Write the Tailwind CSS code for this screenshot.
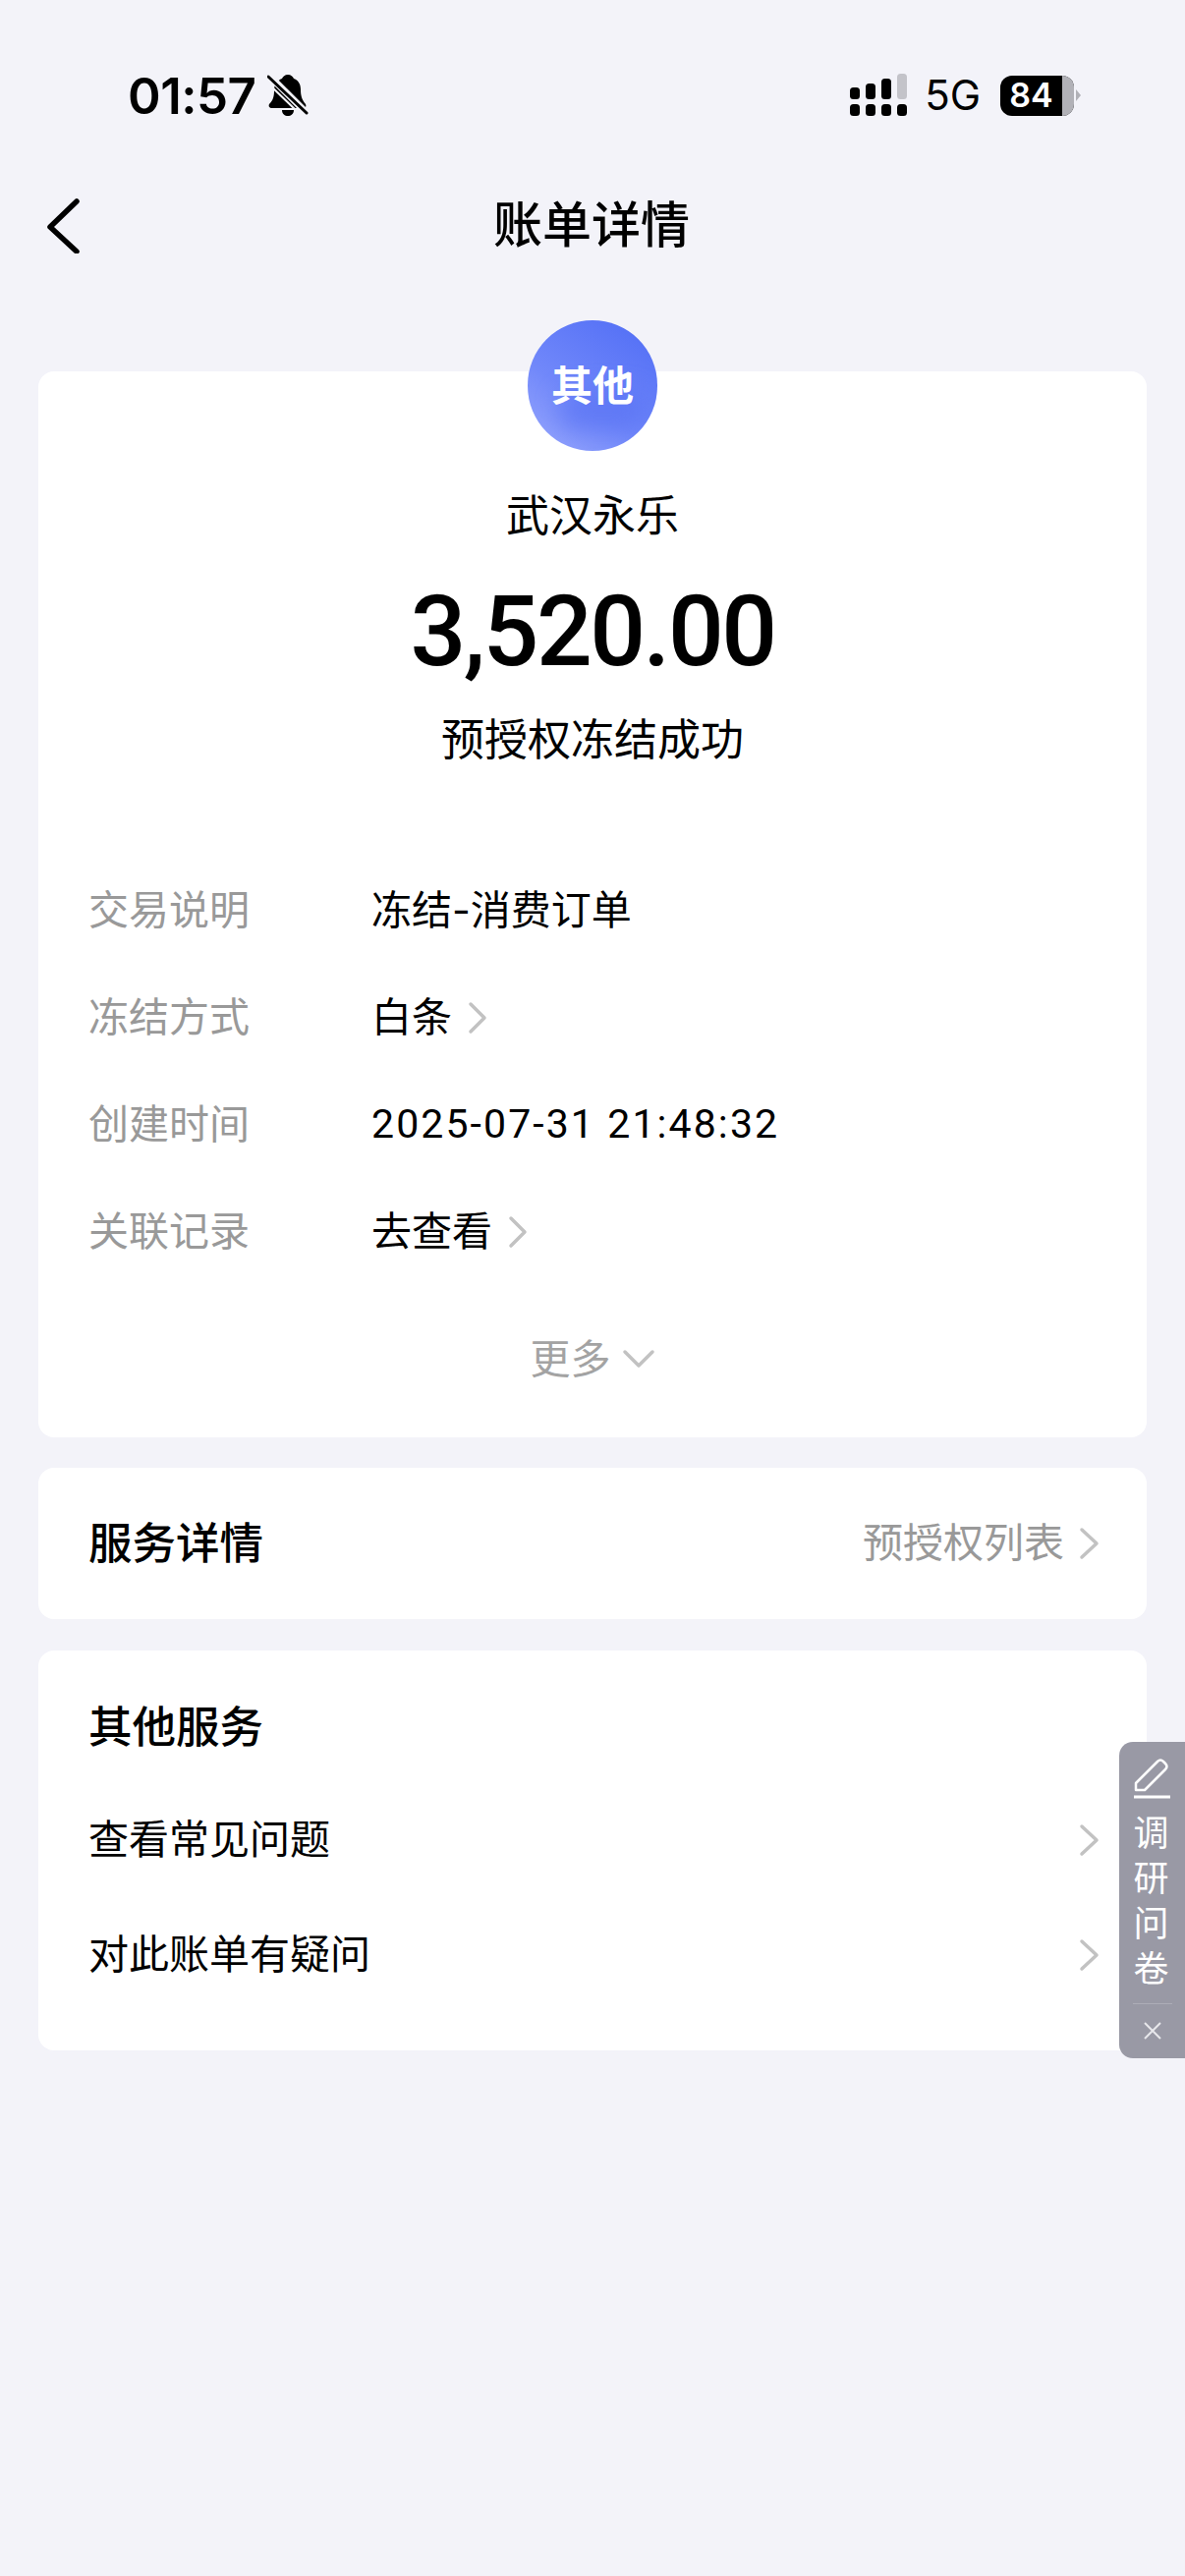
<!DOCTYPE html>
<html lang="zh-CN">
<head>
    <meta charset="UTF-8">
    <meta name="viewport" content="width=device-width, initial-scale=1.0">
    <title>账单详情</title>
    <script src="https://cdn.jsdelivr.net/npm/@tailwindcss/browser@4"></script>
</head>
<body class="relative w-[1206px] h-[2622px] overflow-hidden bg-[#f3f3f9] text-black font-['Inter','Noto_Sans_CJK_SC',sans-serif]">
    <!-- status bar -->
    <div class="h-[158px] pt-[66px] pl-[130px] pr-[106px] flex justify-between items-start">
        <div class="flex items-center h-[62px] gap-[12px]">
            <span class="text-[51px] leading-none font-semibold font-['Inter',sans-serif] tracking-[-0.5px]">01:57</span>
            <svg class="w-[42px] h-[44px]" viewBox="0 0 42 44">
                <path d="M21 1c3 0 5 2 6 4 5 2 7 6 7 11 0 6 1 10 5 15 1 2 0 4-2 4H5c-3 0-4-2-3-4 4-4 5-8 5-14 0-6 3-10 8-12 1-2 3-4 6-4zM15 37h12c0 4-3 6-6 6s-6-2-6-6z" fill="#000"/>
                <path d="M2 2l38 38" stroke="#f3f3f9" stroke-width="7"/>
                <path d="M1 3l39 37" stroke="#000" stroke-width="3" stroke-linecap="round"/>
                <path d="M0 9l31 30" stroke="#f3f3f9" stroke-width="2"/>
            </svg>
        </div>
        <div class="flex items-center h-[62px]">
            <svg class="w-[58px] h-[44px]" viewBox="0 0 58 44">
                <rect x="0" y="14" width="10" height="12" rx="3.5" fill="#000"/>
                <rect x="16" y="10" width="10" height="16" rx="3.5" fill="#000"/>
                <rect x="32" y="5" width="10" height="21" rx="3.5" fill="#000"/>
                <rect x="48" y="0" width="10" height="26" rx="3.5" fill="#c3c3c9"/>
                <rect x="0" y="31" width="10" height="12" rx="3.5" fill="#000"/>
                <rect x="16" y="31" width="10" height="12" rx="3.5" fill="#000"/>
                <rect x="32" y="31" width="10" height="12" rx="3.5" fill="#000"/>
                <rect x="48" y="31" width="10" height="12" rx="3.5" fill="#000"/>
            </svg>
            <span class="ml-[18px] text-[42px] leading-none font-['Inter',sans-serif]">5G</span>
            <div class="ml-[20px] relative w-[75px] h-[41px] rounded-[12px] overflow-hidden bg-black flex items-center">
                <span class="w-[63px] text-center text-white text-[34px] leading-none font-semibold font-['Inter',sans-serif]">84</span>
                <div class="absolute right-0 top-0 w-[12px] h-full bg-[#b1b1b7]"></div>
            </div>
            <div class="ml-[2px] w-0 h-0 border-y-[6px] border-y-transparent border-l-[5px] border-l-[#b1b1b7]"></div>
        </div>
    </div>
    <!-- nav -->
    <div class="relative h-[220px] flex justify-center items-start pt-[42px]">
        <svg class="absolute left-[47px] top-[44px] w-[34px] h-[56px]" viewBox="0 0 34 56" fill="none">
            <path d="M31 3L4 29l27 25" stroke="#000" stroke-width="5.5" stroke-linecap="round" stroke-linejoin="round"/>
        </svg>
        <h1 class="text-[50px] leading-[58px] font-medium -translate-x-[1px]">账单详情</h1>
    </div>
    <!-- cards -->
    <div class="px-[39px] flex flex-col">
        <div class="h-[1085px] bg-white rounded-[16px] flex flex-col items-center">
            <div class="-mt-[52px] relative w-[132px] h-[133px] rounded-full overflow-hidden bg-[linear-gradient(215deg,#4f6cf5_0%,#7188fa_60%,#9aa9fd_100%)] flex items-center justify-center">
                <div class="absolute left-[32px] top-[72px] w-[90px] h-[40px] rounded-full bg-[#5a74f4]/70 blur-[12px]"></div>
                <span class="relative text-white text-[42px] leading-none font-semibold">其他</span>
            </div>
            <div class="mt-[39px] text-[44px] leading-[54px]">武汉永乐</div>
            <div class="mt-[31px] text-[100px] leading-[120px] font-medium font-['Roboto',sans-serif] tracking-[-2.5px]">3,520.00</div>
            <div class="mt-[23px] text-[44px] leading-[54px]">预授权冻结成功</div>

            <div class="mt-[92px] w-full pl-[51px] flex flex-col text-[41px] leading-[109px]">
                <div class="flex h-[109px] items-center">
                    <span class="w-[288px] text-[#999999]">交易说明</span>
                    <span>冻结-消费订单</span>
                </div>
                <div class="flex h-[109px] items-center">
                    <span class="w-[288px] text-[#999999]">冻结方式</span>
                    <span>白条</span>
                    <svg class="ml-[16px] w-[20px] h-[34px]" viewBox="0 0 20 34" fill="none"><path d="M3 3l14 14L3 31" stroke="#c2c2c2" stroke-width="3.5" stroke-linecap="round" stroke-linejoin="round"/></svg>
                </div>
                <div class="flex h-[109px] items-center">
                    <span class="w-[288px] text-[#999999]">创建时间</span>
                    <span class="font-['Roboto',sans-serif] tracking-[2.1px]">2025-07-31 21:48:32</span>
                </div>
                <div class="flex h-[109px] items-center">
                    <span class="w-[288px] text-[#999999]">关联记录</span>
                    <span>去查看</span>
                    <svg class="ml-[16px] w-[20px] h-[34px]" viewBox="0 0 20 34" fill="none"><path d="M3 3l14 14L3 31" stroke="#c2c2c2" stroke-width="3.5" stroke-linecap="round" stroke-linejoin="round"/></svg>
                </div>
            </div>

            <div class="mt-[45px] flex items-center text-[41px] leading-[60px] text-[#a3a3a3]">
                <span>更多</span>
                <svg class="ml-[11px] w-[34px] h-[20px]" viewBox="0 0 34 20" fill="none"><path d="M3 3l14 14L31 3" stroke="#c2c2c2" stroke-width="3.5" stroke-linecap="round" stroke-linejoin="round"/></svg>
            </div>
        </div>

        <div class="mt-[31px] h-[154px] bg-white rounded-[16px] pl-[51px] pr-[47px] flex items-center justify-between">
            <span class="text-[44.5px] font-medium">服务详情</span>
            <div class="flex items-center text-[41px] text-[#999999]">
                <span>预授权列表</span>
                <svg class="ml-[15px] w-[22px] h-[34px]" viewBox="0 0 22 34" fill="none"><path d="M3 3l15 14L3 31" stroke="#c2c2c2" stroke-width="3.5" stroke-linecap="round" stroke-linejoin="round"/></svg>
            </div>
        </div>

        <div class="mt-[32px] h-[407px] bg-white rounded-[16px] pl-[51px] pr-[47px] pt-[47px] flex flex-col">
            <div class="text-[44.5px] leading-[62px] font-medium">其他服务</div>
            <div class="mt-[52px] h-[64px] flex items-center justify-between text-[41px]">
                <span>查看常见问题</span>
                <svg class="w-[22px] h-[34px]" viewBox="0 0 22 34" fill="none"><path d="M3 3l15 14L3 31" stroke="#c2c2c2" stroke-width="3.5" stroke-linecap="round" stroke-linejoin="round"/></svg>
            </div>
            <div class="mt-[53px] h-[64px] flex items-center justify-between text-[41px]">
                <span>对此账单有疑问</span>
                <svg class="w-[22px] h-[34px]" viewBox="0 0 22 34" fill="none"><path d="M3 3l15 14L3 31" stroke="#c2c2c2" stroke-width="3.5" stroke-linecap="round" stroke-linejoin="round"/></svg>
            </div>
        </div>
    </div>
    <!-- survey float -->
    <div class="absolute left-[1139px] top-[1773px] w-[67px] h-[322px] rounded-l-[14px] bg-[#9999a5] text-white flex flex-col items-center pt-[17px]">
        <svg class="w-[38px] h-[41px]" viewBox="0 0 38 41" fill="none">
            <path d="M2 25L24 3c2-2 4-2 6 0l2 2c2 2 2 4 0 6L11 32H2z" stroke="#fff" stroke-width="2.5" stroke-linejoin="round"/>
            <path d="M0 39h37" stroke="#fff" stroke-width="3"/>
        </svg>
        <div class="mt-[12px] -ml-[2px] flex flex-col text-[36px] leading-[46px]">
            <span>调</span><span>研</span><span>问</span><span>卷</span>
        </div>
        <div class="mt-[12px] w-[40px] h-px bg-white/20"></div>
        <svg class="mt-[17px] w-[20px] h-[20px]" viewBox="0 0 20 20" fill="none"><path d="M2 2l16 16M18 2L2 18" stroke="#e8e8ec" stroke-width="2"/></svg>
    </div>
</body>
</html>
